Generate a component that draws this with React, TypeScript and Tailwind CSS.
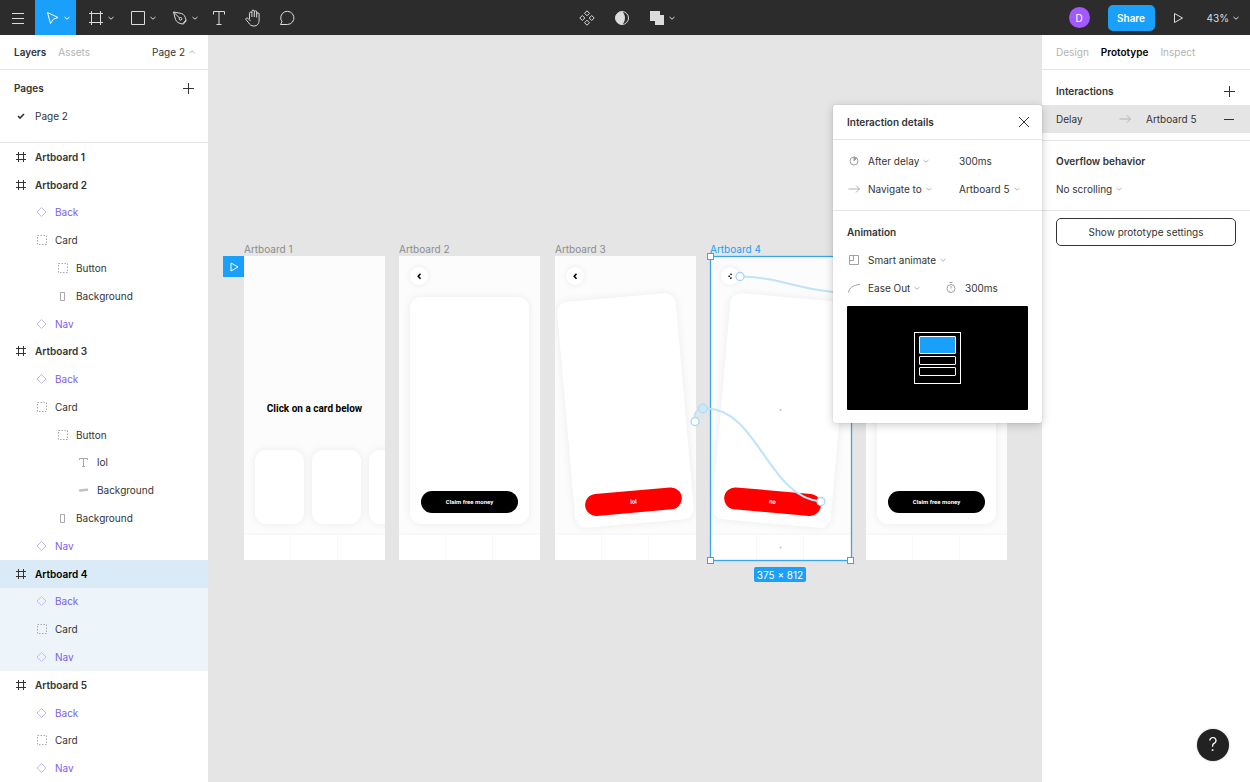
import type { ReactNode } from "react";
import clsx from "clsx";

type LayerType = "frame" | "component" | "group" | "rect" | "text" | "pill";

interface Layer {
  name: string;
  type: LayerType;
  depth: 0 | 1 | 2 | 3;
  selected?: "self" | "child";
}

const layers: Layer[] = [
  { name: "Artboard 1", type: "frame", depth: 0 },
  { name: "Artboard 2", type: "frame", depth: 0 },
  { name: "Back", type: "component", depth: 1 },
  { name: "Card", type: "group", depth: 1 },
  { name: "Button", type: "group", depth: 2 },
  { name: "Background", type: "rect", depth: 2 },
  { name: "Nav", type: "component", depth: 1 },
  { name: "Artboard 3", type: "frame", depth: 0 },
  { name: "Back", type: "component", depth: 1 },
  { name: "Card", type: "group", depth: 1 },
  { name: "Button", type: "group", depth: 2 },
  { name: "lol", type: "text", depth: 3 },
  { name: "Background", type: "pill", depth: 3 },
  { name: "Background", type: "rect", depth: 2 },
  { name: "Nav", type: "component", depth: 1 },
  { name: "Artboard 4", type: "frame", depth: 0, selected: "self" },
  { name: "Back", type: "component", depth: 1, selected: "child" },
  { name: "Card", type: "group", depth: 1, selected: "child" },
  { name: "Nav", type: "component", depth: 1, selected: "child" },
  { name: "Artboard 5", type: "frame", depth: 0 },
  { name: "Back", type: "component", depth: 1 },
  { name: "Card", type: "group", depth: 1 },
  { name: "Nav", type: "component", depth: 1 },
];

const indent = ["pl-[14px]", "pl-[34px]", "pl-[55px]", "pl-[76px]"];

interface IconProps {
  size?: number;
  className?: string;
  children: ReactNode;
}

// Stroke based icon on a square grid, one unit per pixel
function Icon({ size = 14, className, children }: IconProps) {
  return (
    <svg
      width={size}
      height={size}
      viewBox={`0 0 ${size} ${size}`}
      fill="none"
      stroke="currentColor"
      strokeWidth="1"
      aria-hidden="true"
      className={clsx("shrink-0", className)}
    >
      {children}
    </svg>
  );
}

function Chevron({ className, up }: { className?: string; up?: boolean }) {
  return (
    <Icon size={8} className={className}>
      <path d={up ? "M1.5 5 4 2.8 6.5 5" : "M1.5 3 4 5.2 6.5 3"} />
    </Icon>
  );
}

function Plus() {
  return (
    <Icon size={12}>
      <path d="M6.5 1v11M1 6.5h11" />
    </Icon>
  );
}

function ArrowRight() {
  return (
    <Icon size={14} className="text-[#b3b3b3]">
      <path d="M1.5 7h11M9 3.5 12.5 7 9 10.5" />
    </Icon>
  );
}

function LayerIcon({ type }: { type: LayerType }) {
  switch (type) {
    case "frame":
      return (
        <Icon className="text-[#333]">
          <path d="M4.5 2v10M9.5 2v10M2 4.5h10M2 9.5h10" />
        </Icon>
      );
    case "component":
      return (
        <Icon className="text-[#c4bbf5]">
          <path d="M7.5 2.5 12 7l-4.5 4.5L3 7z" />
        </Icon>
      );
    case "group":
      return (
        <Icon className="text-[#a8a8a8]">
          <path d="M3.5 2.5h9v9h-9z" strokeDasharray="1.5 1.5" />
        </Icon>
      );
    case "rect":
      return (
        <Icon className="text-[#a8a8a8]">
          <path d="M5.5 3.5h4v8h-4z" />
        </Icon>
      );
    case "text":
      return (
        <Icon className="text-[#a8a8a8]">
          <path d="M3.5 5V3.5h8V5M7.5 3.5v8M6 11.5h3" />
        </Icon>
      );
    case "pill":
      return (
        <Icon className="text-[#c0c0c0]">
          <path d="M4 7.5 11 6.8" strokeWidth="2.5" strokeLinecap="round" />
        </Icon>
      );
  }
}

interface ToolButtonProps {
  label: string;
  className: string;
  menu?: boolean;
  children: ReactNode;
}

function ToolButton({ label, className, menu, children }: ToolButtonProps) {
  return (
    <button
      type="button"
      aria-label={label}
      className={clsx("flex h-full items-center justify-center gap-[3px]", className)}
    >
      {children}
      {menu && <Chevron />}
    </button>
  );
}

function Toolbar() {
  return (
    <header className="grid h-[35px] shrink-0 grid-cols-[1fr_auto_1fr] bg-[#2c2c2c] text-[#dcdcdc]">
      <div className="flex items-center">
        <ToolButton label="Menu" className="w-[35px]">
          <Icon size={16}>
            <path d="M2 3.5h12M2 8.5h12M2 13.5h12" />
          </Icon>
        </ToolButton>
        <ToolButton label="Move" className="w-[41px] bg-[#18a0fb] pl-1 text-white" menu>
          <Icon size={16}>
            <path d="m3.5 2.5 10.500 5-4.500 1.600-3 4.400z" />
          </Icon>
        </ToolButton>
        <ToolButton label="Frame" className="w-[42px] pl-2" menu>
          <Icon size={16}>
            <path d="M3.5 1v14M12.5 1v14M1 3.5h14M1 12.500h14" />
          </Icon>
        </ToolButton>
        <ToolButton label="Rectangle" className="w-[42px] pl-2" menu>
          <Icon size={16}>
            <path d="M1.5 1.5h13v13h-13z" />
          </Icon>
        </ToolButton>
        <ToolButton label="Pen" className="w-[42px] pl-2" menu>
          <Icon size={16}>
            <path d="m1.5 2 8 1.5c2 .5 4 3 4.500 6.500l-3.500 4C7 13.500 4.500 12 3.500 9.500zM2 2.500l5.500 5.500M14.500 10.500 11 14.500" />
            <circle cx="8.500" cy="8.800" r="1.300" />
          </Icon>
        </ToolButton>
        <ToolButton label="Text" className="w-[34px]">
          <Icon size={16}>
            <path d="M2.5 4.5v-3h11v3M8 1.5v13M5.5 14.500h5" />
          </Icon>
        </ToolButton>
        <ToolButton label="Hand" className="w-[34px]">
          <Icon size={18}>
            <path d="M5.5 10V4.300a1.200 1.200 0 0 1 2.400 0V8M7.900 4V2.300a1.200 1.200 0 0 1 2.400 0V8M10.300 3a1.200 1.200 0 0 1 2.400 0v5.500M12.700 5a1.200 1.200 0 0 1 2.400 0v6c0 4-2 6-5.200 6-3 0-4.300-1.500-5.200-3.200L1.900 10.500c-.4-1.200 1-2 2-1.200L6.500 12" />
          </Icon>
        </ToolButton>
        <ToolButton label="Comment" className="w-[34px]">
          <Icon size={16}>
            <path d="M1.5 14.5h6.800A6.600 6.600 0 1 0 3 11.800z" strokeLinejoin="round" />
          </Icon>
        </ToolButton>
      </div>

      <div className="flex items-center">
        <ToolButton label="Create component" className="w-[35px]">
          <Icon size={16}>
            <path d="m8 .8 2.500 2.500L8 5.800 5.500 3.300zM8 10.200l2.500 2.500L8 15.200l-2.500-2.500zM3.300 5.500 5.800 8l-2.500 2.500L.8 8zM12.700 5.500 15.200 8l-2.500 2.500L10.200 8z" />
          </Icon>
        </ToolButton>
        <ToolButton label="Mask" className="w-[35px]">
          <Icon size={16}>
            <circle cx="8" cy="8" r="6.5" />
            <path d="M8 1.5a6.500 6.500 0 0 0 0 13c2-1.500 3-4 3-6.500S10 3 8 1.500z" fill="currentColor" stroke="none" />
          </Icon>
        </ToolButton>
        <ToolButton label="Union" className="w-[42px] pl-1" menu>
          <Icon size={16}>
            <path d="M1 1h10v4h4v10H6v-4H1z" fill="currentColor" stroke="none" />
          </Icon>
        </ToolButton>
      </div>

      <div className="flex items-center justify-end pr-[10px] text-[10px]">
        <div className="flex size-[21px] items-center justify-center rounded-full bg-[#a259ff] text-white">
          D
        </div>
        <button
          type="button"
          className="ml-[18px] h-[26px] w-[47px] rounded-[5px] bg-[#18a0fb] font-semibold text-white"
        >
          Share
        </button>
        <button type="button" aria-label="Present" className="ml-4">
          <Icon>
            <path d="m3.5 2.5 8 4.500-8 4.500z" />
          </Icon>
        </button>
        <button type="button" className="ml-[22px] flex items-center gap-[3px]">
          43%
          <Chevron />
        </button>
      </div>
    </header>
  );
}

function LeftPanel() {
  return (
    <aside className="flex w-[209px] shrink-0 flex-col border-r border-[#e5e5e5] bg-white">
      <div className="flex h-[35px] items-center border-b border-[#e5e5e5] pr-3 pl-[14px]">
        <button type="button" className="font-semibold">Layers</button>
        <button type="button" className="ml-3 text-[#b3b3b3]">Assets</button>
        <button type="button" className="ml-auto flex items-center gap-[3px]">
          Page 2
          <Chevron up className="text-[#b3b3b3]" />
        </button>
      </div>

      <section className="border-b border-[#e5e5e5] pt-1 pb-3">
        <div className="flex h-7 items-center justify-between px-[14px]">
          <h2 className="font-semibold">Pages</h2>
          <button type="button" aria-label="Add page">
            <Plus />
          </button>
        </div>
        <button type="button" className="flex h-7 w-full items-center gap-[7px] px-[14px]">
          <Icon>
            <path d="m4 7 2 2 4-4" strokeWidth="1.6" />
          </Icon>
          Page 2
        </button>
      </section>

      <ul className="grid flex-1 auto-rows-fr">
        {layers.map((layer, i) => (
          <li key={i} className="flex min-h-6">
            <button
              type="button"
              className={clsx(
                "flex w-full items-center gap-[7px]",
                indent[layer.depth],
                layer.type === "frame" && "font-semibold",
                layer.type === "component" && "text-[#7b61e8]",
                layer.selected === "self" && "bg-[#daebf7] text-black",
                layer.selected === "child" && "bg-[#edf5fa]"
              )}
            >
              <LayerIcon type={layer.type} />
              {layer.name}
            </button>
          </li>
        ))}
      </ul>
    </aside>
  );
}

interface ArtboardProps {
  name: string;
  className: string;
  active?: boolean;
  children: ReactNode;
}

function Artboard({ name, className, active, children }: ArtboardProps) {
  return (
    <div className={clsx("absolute top-[207px]", className)}>
      <div className={clsx("h-[14px] text-[10px] leading-[14px]", active ? "text-[#18a0fb]" : "text-[#8c8c8c]")}>
        {name}
      </div>
      <div className="flex h-[304px] w-[141px] flex-col overflow-hidden bg-[#fcfcfc] font-[Roboto,sans-serif]">
        {children}
        <div className="mt-auto grid h-[25px] shrink-0 grid-cols-3 divide-x divide-[#f8f8f8] bg-white shadow-[0_0_4px_rgba(0,0,0,0.06)]">
          <div />
          <div />
          <div />
        </div>
      </div>
    </div>
  );
}

interface CardScreenProps {
  button: string;
  buttonColor?: string;
  tilt?: string;
  chevronDash?: string;
}

function CardScreen({ button, buttonColor = "bg-black", tilt, chevronDash }: CardScreenProps) {
  return (
    <div className="px-[11px] pt-[11px]">
      <div className="flex size-[18px] items-center justify-center rounded-full bg-white shadow-[0_0_6px_rgba(0,0,0,0.08)]">
        <Icon size={8} className="text-black">
          <path d="M5.5 1.8 3.200 4.300 5.500 6.800" strokeWidth="1.6" strokeDasharray={chevronDash} />
        </Icon>
      </div>
      <div
        className={clsx(
          "mt-3 flex h-[227px] flex-col justify-end rounded-[11px] bg-white p-[11px] shadow-[0_0_8px_rgba(0,0,0,0.07)]",
          tilt
        )}
      >
        <div className={clsx("flex h-[22px] items-center justify-center rounded-full text-[6px] font-bold text-white", buttonColor)}>
          {button}
        </div>
      </div>
    </div>
  );
}

// Prototype wires and selection handles, in canvas coordinates
function Wires() {
  return (
    <svg className="pointer-events-none absolute inset-0 h-full w-full" fill="none" aria-hidden="true">
      <rect x="501.5" y="221.5" width="141" height="304" stroke="#3aa5ea" strokeWidth="1.3" />
      <g fill="#fff" stroke="#3aa5ea">
        <rect x="498.5" y="218.5" width="6" height="6" />
        <rect x="498.5" y="522.5" width="6" height="6" />
        <rect x="638.5" y="522.5" width="6" height="6" />
      </g>
      <g stroke="#bfe3f8" strokeWidth="2">
        <path d="M531 241.5C572 242 590 256 636 258" />
        <path d="M612 466.5C560 463 548 374 498 373.5C490 373.5 485 376 486 382" />
      </g>
      <g fill="#fff" stroke="#a5d8f6" strokeWidth="1.3">
        <circle cx="531" cy="241.5" r="4" />
        <circle cx="612" cy="466.5" r="4" />
        <circle cx="486" cy="386.5" r="4" />
      </g>
      <circle cx="494" cy="373.5" r="4.5" fill="#cde7f6" stroke="#a5d8f6" />
      <g fill="#d3b8bd">
        <circle cx="571.5" cy="375" r="1" />
        <circle cx="571.5" cy="512.5" r="1" />
      </g>
    </svg>
  );
}

function Dropdown({ label, value }: { label: string; value: string }) {
  return (
    <label className="flex items-center gap-[3px]">
      <select aria-label={label} className="field-sizing-content appearance-none bg-transparent">
        <option>{value}</option>
      </select>
      <Chevron className="text-[#b3b3b3]" />
    </label>
  );
}

function InteractionDetails() {
  return (
    <section className="absolute top-[70px] right-0 z-10 w-[209px] rounded-[2px] bg-white shadow-[0_2px_10px_rgba(0,0,0,0.2),0_0_1px_rgba(0,0,0,0.3)]">
      <div className="flex h-[35px] items-center justify-between border-b border-[#e5e5e5] pr-3 pl-[14px]">
        <h2 className="font-semibold">Interaction details</h2>
        <button type="button" aria-label="Close">
          <Icon size={12}>
            <path d="m1 1 10 10M11 1 1 11" />
          </Icon>
        </button>
      </div>

      <div className="border-b border-[#e5e5e5] px-[14px] py-[7px]">
        <div className="grid h-7 grid-cols-[14px_84px_1fr] items-center gap-x-[7px]">
          <Icon className="text-[#a0a0a0]">
            <circle cx="7" cy="7" r="4" />
            <path d="M7 7V3l2.800 1.200z" fill="currentColor" />
          </Icon>
          <Dropdown label="Trigger" value="After delay" />
          <input aria-label="Delay" defaultValue="300ms" className="w-full min-w-0" />
        </div>
        <div className="grid h-7 grid-cols-[14px_84px_1fr] items-center gap-x-[7px]">
          <ArrowRight />
          <Dropdown label="Action" value="Navigate to" />
          <Dropdown label="Destination" value="Artboard 5" />
        </div>
      </div>

      <div className="px-[14px] pt-[7px] pb-[13px]">
        <h3 className="flex h-7 items-center font-semibold">Animation</h3>
        <div className="flex h-7 items-center gap-[7px]">
          <Icon className="text-[#a0a0a0]">
            <path d="M2.5 2.5h9v9h-9zM2.5 7.5h4v-5" />
          </Icon>
          <Dropdown label="Animation type" value="Smart animate" />
        </div>
        <div className="grid h-7 grid-cols-[14px_69px_14px_1fr] items-center gap-x-[7px]">
          <Icon className="text-[#a0a0a0]">
            <path d="M1.5 11.5C2 7 6 4 13 3.500" />
          </Icon>
          <Dropdown label="Easing" value="Ease Out" />
          <Icon className="text-[#a0a0a0]">
            <circle cx="7" cy="7.500" r="4" />
            <path d="M5.500 1.500h3M7 5v2.500" />
          </Icon>
          <input aria-label="Duration" defaultValue="300ms" className="w-full min-w-0" />
        </div>
        <div className="mt-1 flex h-[104px] items-center justify-center rounded-[1px] bg-black">
          <div className="flex h-[52px] w-[47px] flex-col gap-[2px] border border-white px-1 pt-[3px]">
            <div className="h-[18px] rounded-[1px] border border-white bg-[#18a0fb]" />
            <div className="h-[9px] rounded-[1px] border border-white" />
            <div className="h-[9px] rounded-[1px] border border-white" />
          </div>
        </div>
      </div>
    </section>
  );
}

function Canvas() {
  return (
    <main className="relative min-w-0 flex-1 bg-[#e5e5e5]">
      <div className="absolute inset-0 overflow-hidden">
        <button
          type="button"
          aria-label="Play from Artboard 1"
          className="absolute top-[221px] left-[14px] flex size-[21px] items-center justify-center bg-[#18a0fb] text-white"
        >
          <Icon>
            <path d="m4 3 7 4-7 4z" />
          </Icon>
        </button>
        <Artboard name="Artboard 1" className="left-[35px]">
          <p className="pt-[146px] text-center text-[10px] leading-[14px] font-bold text-black">Click on a card below</p>
          <div className="mt-[34px] flex gap-2 pl-[11px]">
            {[1, 2, 3].map((i) => (
              <div key={i} className="h-[74px] w-[49px] shrink-0 rounded-[11px] bg-white shadow-[0_0_8px_rgba(0,0,0,0.07)]" />
            ))}
          </div>
        </Artboard>
        <Artboard name="Artboard 2" className="left-[190px]">
          <CardScreen button="Claim free money" />
        </Artboard>
        <Artboard name="Artboard 3" className="left-[346px]">
          <CardScreen button="lol" buttonColor="bg-[#ff0000]" tilt="-rotate-5" />
        </Artboard>
        <Artboard name="Artboard 4" className="left-[501px]" active>
          <CardScreen button="no" buttonColor="bg-[#ff0000]" tilt="rotate-5" chevronDash="1.4 1.2" />
        </Artboard>
        <Artboard name="Artboard 5" className="left-[657px]">
          <CardScreen button="Claim free money" />
        </Artboard>
        <Wires />
        <div className="absolute top-[532px] left-[545px] flex h-[15px] w-[52px] items-center justify-center rounded-[2px] bg-[#18a0fb] text-[10px] text-white">
          375 × 812
        </div>
      </div>
      <InteractionDetails />
    </main>
  );
}

function RightPanel() {
  return (
    <aside className="flex w-[208px] shrink-0 flex-col bg-white">
      <div className="flex h-[35px] items-center gap-3 border-b border-[#e5e5e5] px-[14px]">
        <button type="button" className="text-[#b3b3b3]">Design</button>
        <button type="button" className="font-semibold text-black">Prototype</button>
        <button type="button" className="text-[#b3b3b3]">Inspect</button>
      </div>

      <section className="border-b border-[#e5e5e5] py-[7px]">
        <div className="flex h-7 items-center justify-between pr-[15px] pl-[14px]">
          <h2 className="font-semibold">Interactions</h2>
          <button type="button" aria-label="Add interaction">
            <Plus />
          </button>
        </div>
        <div className="flex h-7 items-center bg-[#e5e5e5] pr-[15px] pl-[14px]">
          <span className="w-[62px]">Delay</span>
          <ArrowRight />
          <span className="ml-[14px]">Artboard 5</span>
          <button type="button" aria-label="Remove interaction" className="ml-auto">
            <Icon size={12}>
              <path d="M1 6.5h10" />
            </Icon>
          </button>
        </div>
      </section>

      <section className="border-b border-[#e5e5e5] px-[14px] pt-[6px] pb-[7px]">
        <h2 className="flex h-7 items-center font-semibold">Overflow behavior</h2>
        <div className="flex h-7 items-center">
          <Dropdown label="Overflow behavior" value="No scrolling" />
        </div>
      </section>

      <div className="px-[14px] pt-[7px]">
        <button type="button" className="h-7 w-full rounded-[5px] border border-[#333]">
          Show prototype settings
        </button>
      </div>
    </aside>
  );
}

export default function App() {
  return (
    <div className="flex h-screen flex-col overflow-hidden bg-white font-[Inter,sans-serif] text-[10px] leading-[14px] text-[#333]">
      <Toolbar />
      <div className="flex min-h-0 flex-1">
        <LeftPanel />
        <Canvas />
        <RightPanel />
      </div>
      <button
        type="button"
        aria-label="Help"
        className="fixed right-[21px] bottom-[21px] flex size-8 items-center justify-center rounded-full bg-[#222] text-[18px] font-light text-white shadow-[0_0_2px_rgba(0,0,0,0.3)]"
      >
        ?
      </button>
    </div>
  );
}
